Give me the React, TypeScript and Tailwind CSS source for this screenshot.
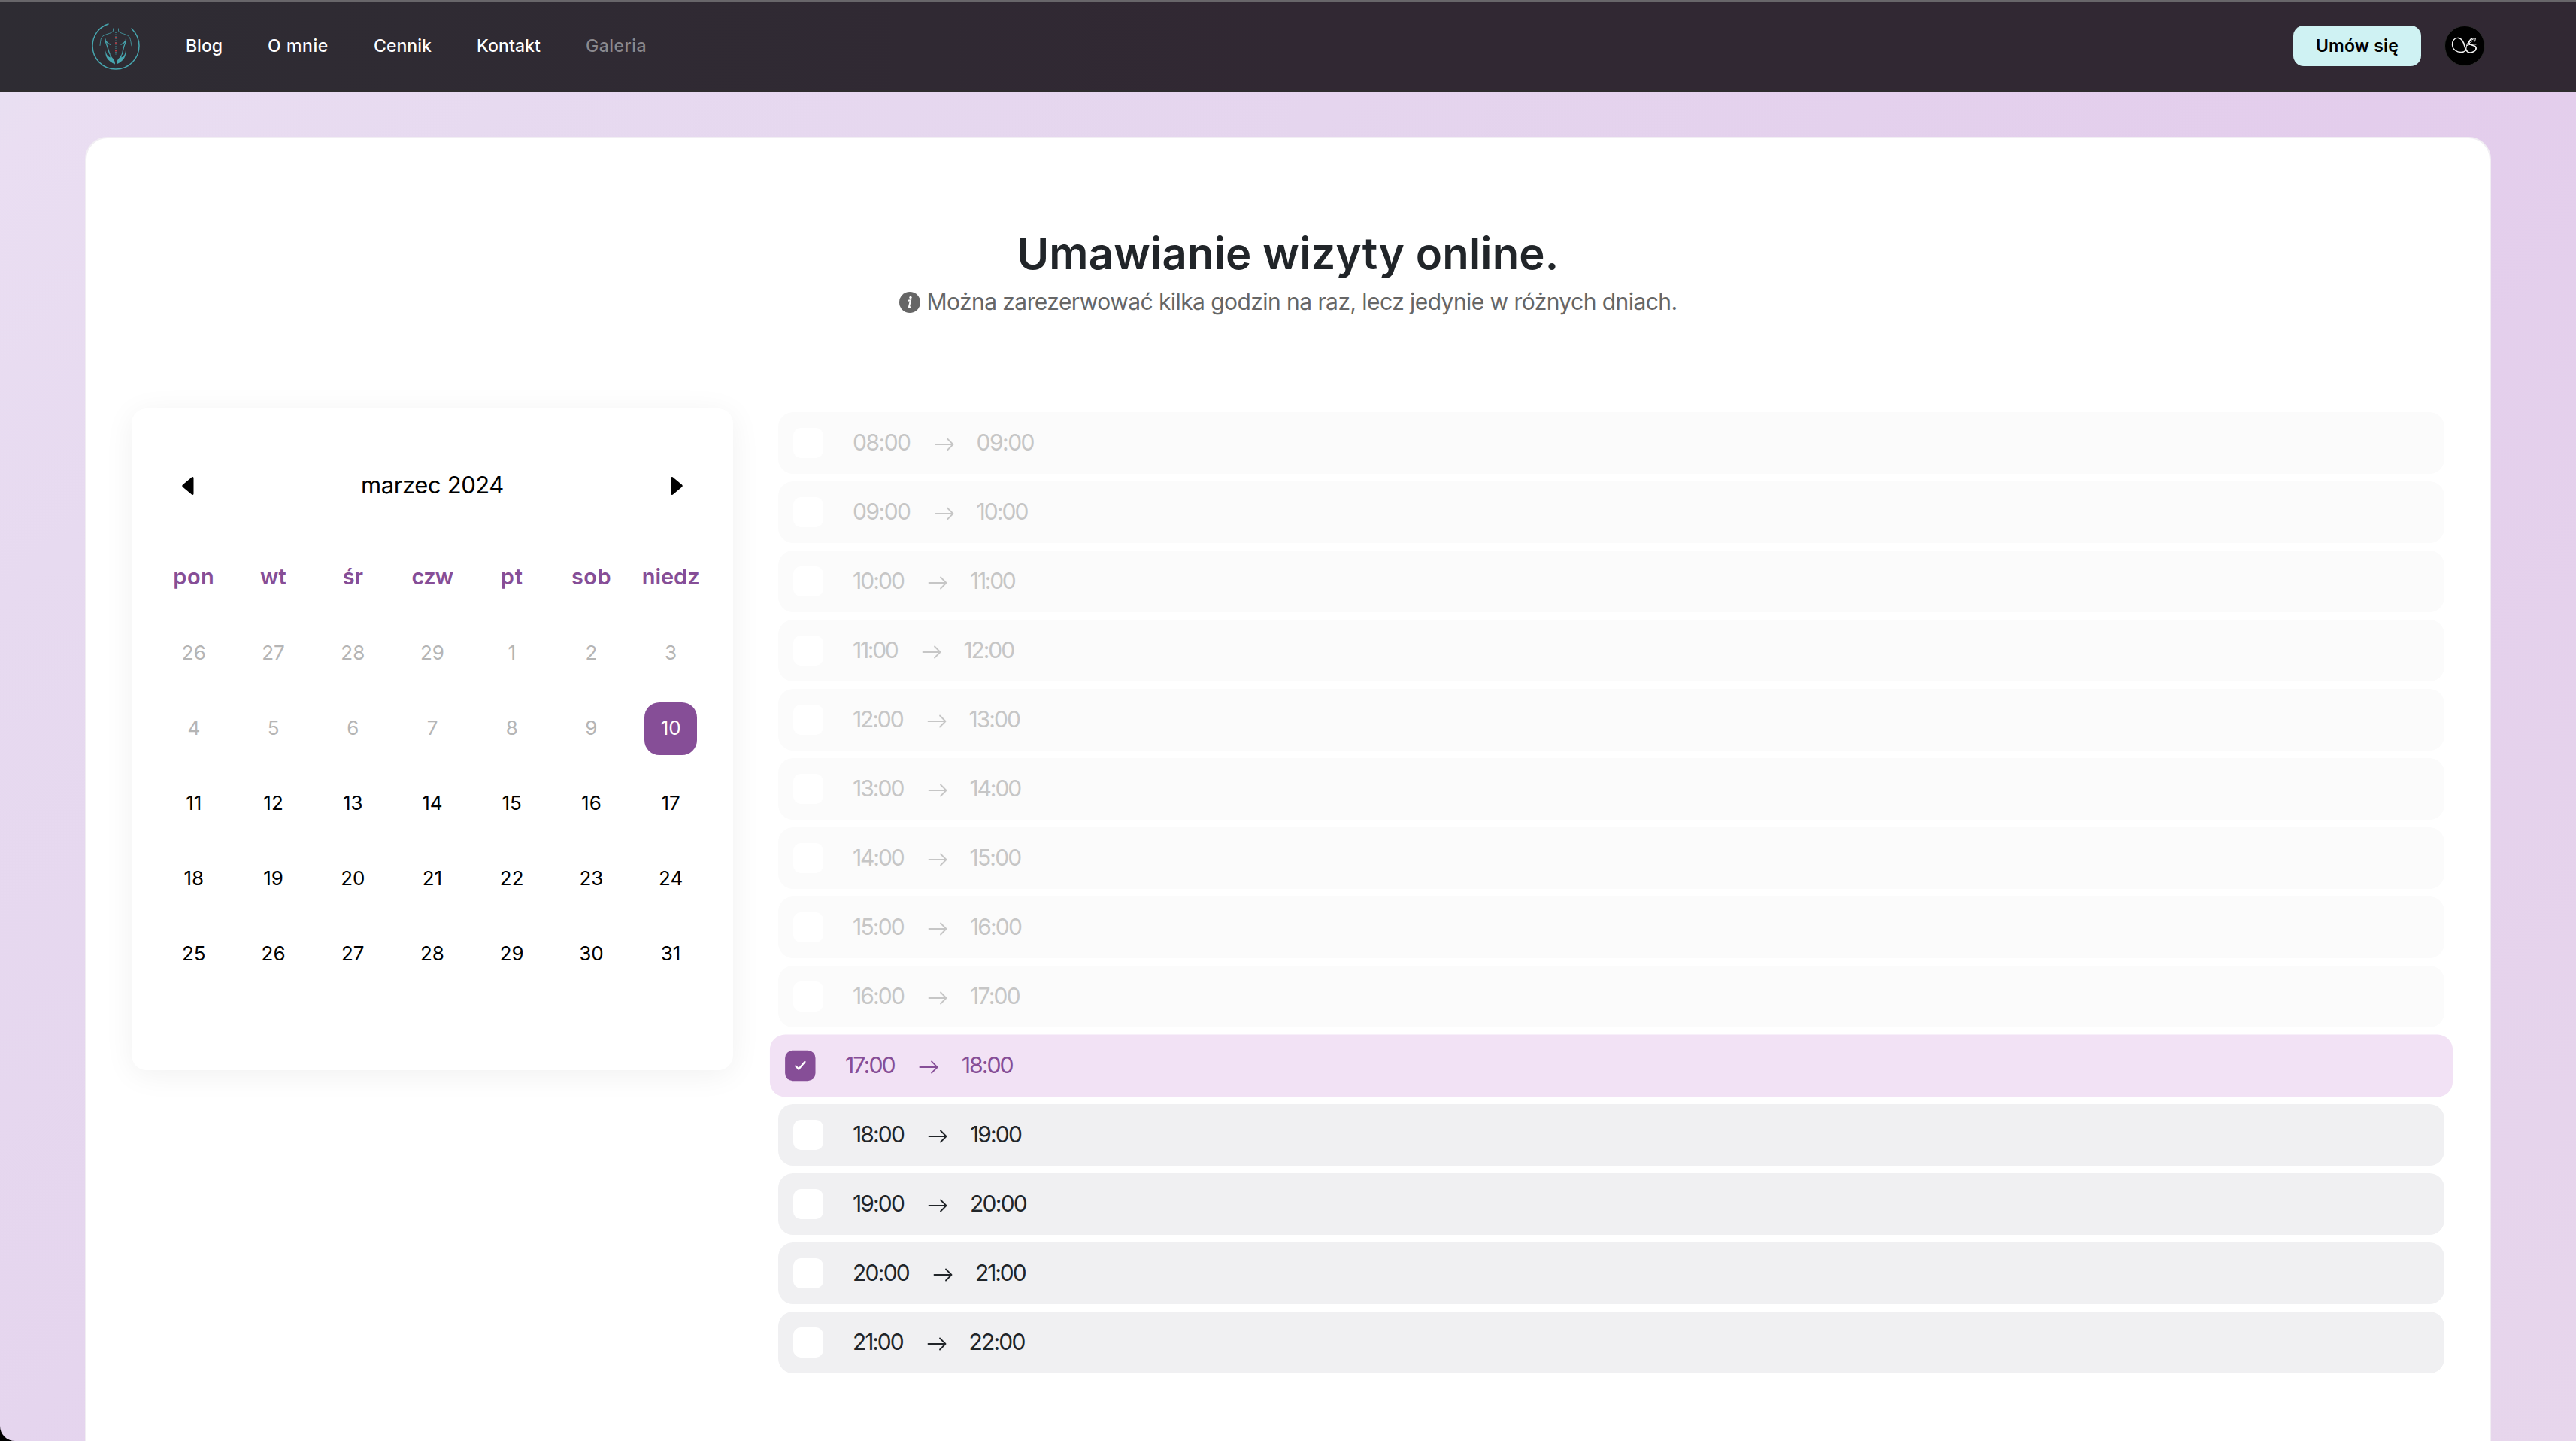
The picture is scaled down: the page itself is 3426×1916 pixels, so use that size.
import { useLayoutEffect, useRef } from 'react';

type FitProps = { text: string; w: number; className?: string };

/* Inline text tracked so that it spans a fixed width. */
function Fit({ text, w, className = '' }: FitProps) {
  const ref = useRef<HTMLSpanElement>(null);
  useLayoutEffect(() => {
    const el = ref.current;
    if (!el) return;
    el.style.letterSpacing = '0px';
    const natural = el.getBoundingClientRect().width;
    el.style.letterSpacing = `${(w - natural) / text.length}px`;
  }, [text, w]);
  return (
    <span ref={ref} className={`inline-block whitespace-pre ${className}`}>
      {text}
    </span>
  );
}

const nav = [
  { label: 'Blog', w: 49 },
  { label: 'O mnie', w: 81 },
  { label: 'Cennik', w: 77 },
  { label: 'Kontakt', w: 85 },
  { label: 'Galeria', w: 81, muted: true },
];

const weekdays = [
  { label: 'pon', w: 55 },
  { label: 'wt', w: 35 },
  { label: 'śr', w: 27 },
  { label: 'czw', w: 55 },
  { label: 'pt', w: 30 },
  { label: 'sob', w: 53 },
  { label: 'niedz', w: 77 },
];

const days = [
  26, 27, 28, 29, 1, 2, 3, 4, 5, 6, 7, 8, 9, 10, 11, 12, 13, 14, 15, 16, 17, 18,
  19, 20, 21, 22, 23, 24, 25, 26, 27, 28, 29, 30, 31,
];

const hourWidths: Record<string, number> = {
  '08': 76.5, '09': 76.5, '10': 68, '11': 59.500, '12': 66.500, '13': 67.500, '14': 67.500,
  '15': 68, '16': 68, '17': 66, '18': 68, '19': 68, '20': 75, '21': 66.500, '22': 74,
};
const hours = ['08', '09', '10', '11', '12', '13', '14', '15', '16', '17', '18', '19', '20', '21'];
const nextHour = (h: string) => String(Number(h) + 1).padStart(2, '0');

function Logo() {
  return (
    <svg viewBox="0 -9 110 100" className="h-[100px] w-[110px]" fill="none" stroke="#47a5ae" strokeLinecap="round">
      <path d="M44 11C31 15 23 27 23 40a31 31 0 0 0 62 0c0-9-4-17-10-23" strokeWidth="1.5" />
      <path d="M50.500 17v3c-1 4-13 4-15.500 9-1.500 3-1.500 7-2 10.500" strokeWidth="1" opacity=".8" />
      <path d="M57.500 17v3c1 4 13 4 15 9 1.500 3 1.500 7 2.500 11" strokeWidth="1" opacity=".8" />
      <path d="M40 31c0 3 1 6 2 8s2 7 4 12M46.500 38c-2-.5-4-1.500-6-5M67.500 31c0 3-1 6-2 8s-2 7-3 12M61 38c2-.5 4-1.500 6-5" strokeWidth="1.300" />
      <path d="M54 22v31" strokeWidth="1.500" strokeDasharray="1 1.600" strokeLinecap="butt" opacity=".75" />
      <path d="M54 28v1.500M54 35.500v2M54 46v1.500" stroke="#d8343b" strokeWidth="1.600" strokeLinecap="butt" />
      <path d="M40.500 46c-1 8 2 14 12.500 18.500 0-4-1-6-4-9l-3-5 .5 5c-4-2-5.500-5-6-9.500ZM67 46c1 8-2 14-12 18.500 0-4 1-6 4-9l3-5-.5 5c4-2 5-5 5.500-9.500Z" fill="#47a5ae" stroke="none" />
    </svg>
  );
}

function Monogram() {
  return (
    <svg viewBox="0 0 52 52" className="h-[52px] w-[52px]" fill="none" stroke="#f4f4f4" strokeLinecap="round">
      <path d="M18 15.500C12 14.500 9 20 9.500 25c.5 6 6 9.500 11.500 9.500 3 0 5-1 6.500-2.500" strokeWidth="1.300" />
      <path d="M18 15.500c5 1 7 7 8 11s2.500 7.500 6 8.500" strokeWidth="1.700" />
      <path d="M27.500 32c1-4 .5-8 3.500-11 3-2.500 6-4 9.500-5.500l-1 4.500c-2-1.500-5 0-6 1.500" strokeWidth="1" />
      <path d="M36 16c-3 1.500-5.500 5-3.500 7.500 2 2 7.500 1.500 8.500 4.500 1 4-4 7.500-9 7" strokeWidth="1.700" />
      <path d="M29 25.500c4-1.500 8-2 12-1.500" strokeWidth="1" />
    </svg>
  );
}

function Header() {
  return (
    <header className="flex h-[122px] items-center justify-between border-t-2 border-b-2 border-t-[#68666a] border-b-[#2e2d2e] bg-gradient-to-r from-[#2e2c33] to-[#312833] to-50% pr-[121px] pl-[100px] text-white">
      <div className="flex items-center">
        <div className="h-[98px]">
          <Logo />
        </div>
        <nav className="ml-[37px] flex gap-[60px]">
          {nav.map((n) => (
            <Fit key={n.label} text={n.label} w={n.w} className={`text-[23px] font-medium ${n.muted ? 'text-[#8b898d]' : 'text-white'}`} />
          ))}
        </nav>
      </div>
      <div className="flex items-center gap-[31px]">
        <button className="h-[54px] w-[170px] rounded-[14px] bg-[#cff2f3] text-black">
          <Fit text="Umów się" w={110} className="text-[23px] font-semibold" />
        </button>
        <div className="flex h-[54px] w-[54px] items-center justify-center rounded-full border border-[#2e2d2e] bg-black">
          <Monogram />
        </div>
      </div>
    </header>
  );
}

function Calendar() {
  return (
    <section className="h-[880px] w-[800px] shrink-0 rounded-[20px] bg-white px-[30px] shadow-[0_6px_40px_rgba(0,0,0,0.06)]">
      <div className="flex h-[206px] items-center justify-between px-[37px]">
        <svg viewBox="0 0 16 24" className="h-6 w-4"><path d="M15.500 1.500v21c0 1.500-1.500 2-2.500 1L1 13.500q-1.500-1.500 0-3L13 .5c1-1 2.500-.5 2.500 1Z" /></svg>
        <Fit text="marzec 2024" w={190} className="-mt-[2px] text-[31px] text-black" />
        <svg viewBox="0 0 16 24" className="h-6 w-4"><path d="M.5 1.500v21c0 1.500 1.500 2 2.500 1l12-10q1.500-1.500 0-3L3 .5C2 -.5.5 0 .5 1.500Z" /></svg>
      </div>
      <div className="-mt-[17px] mb-[17px] grid grid-cols-7">
        {weekdays.map((d) => (
          <div key={d.label} className="flex h-[70px] items-center justify-center text-[29px] font-semibold text-[#864e97]">
            <Fit text={d.label} w={d.w} />
          </div>
        ))}
      </div>
      <div className="grid grid-cols-7">
        {days.map((d, i) => (
          <div key={i} className="flex h-[100px] items-center justify-center">
            <span
              className={`flex h-[70px] w-[70px] items-center justify-center rounded-[20px] pb-[3px] text-[26px] ${
                i === 13 ? 'bg-[#864e97] text-white' : i < 13 ? 'text-[#b5b5b5]' : 'text-black'
              }`}
            >
              {d}
            </span>
          </div>
        ))}
      </div>
    </section>
  );
}

function Slot({ hour }: { hour: string }) {
  const n = Number(hour);
  const selected = n === 17;
  const tone = selected
    ? 'relative scale-[1.01] bg-[#f2e2f5] text-[#864e97]'
    : n < 17
      ? 'bg-[#fbfbfb] text-[#c6c6c6]'
      : 'bg-[#f0f0f2] text-[#212529]';
  return (
    <div className={`flex h-[82px] items-center rounded-[20px] pl-5 text-[30px] ${tone}`}>
      <span className={`flex h-10 w-10 items-center justify-center rounded-[10px] ${selected ? 'bg-[#864e97]' : 'bg-white'}`}>
        {selected && (
          <svg viewBox="0 0 16 14" className="h-[14px] w-4" fill="none" stroke="white" strokeWidth="2.400" strokeLinecap="round" strokeLinejoin="round">
            <path d="M2 7.500 6 11.500 14 2" />
          </svg>
        )}
      </span>
      <Fit text={`${hour}:00`} w={hourWidths[hour]} className="-mt-[2px] ml-[39px]" />
      <svg viewBox="0 0 26 18" className="mr-[30px] ml-[32px] mt-[3px] h-[18px] w-[26px]" fill="none" stroke="currentColor" strokeWidth="1.800" strokeLinecap="round" strokeLinejoin="round">
        <path d="M1.500 9h23M17 1.500 24.500 9 17 16.500" />
      </svg>
      <Fit text={`${nextHour(hour)}:00`} w={hourWidths[nextHour(hour)]} className="-mt-[2px]" />
    </div>
  );
}

export default function App() {
  return (
    <div className="h-[1916px] w-[3426px] overflow-hidden bg-black font-['Inter',sans-serif]">
      <div className="h-full overflow-hidden rounded-bl-[20px] bg-[linear-gradient(135deg,#e6e1f2_0%,#eadef2_4%,#e7daf0_15%,#e5d5ee_36%,#e3cdec_62%,#e7d6ec_100%)]">
        <Header />
        <main className="mx-[113px] mt-[60px] h-[1800px] rounded-[30px] border-2 border-[#f1eef3] bg-white px-[60px] pt-[118px]">
          <div className="flex flex-col items-center">
            <h1 className="flex h-[72px] items-center text-[58px] font-semibold text-[#212529]">
              <Fit text="Umawianie wizyty online." w={721} className="-mt-[2px]" />
            </h1>
            <p className="flex h-[56px] items-center gap-[9px] text-[30px] text-[#666]">
              <svg viewBox="0 0 28 28" className="h-7 w-7">
                <circle cx="14" cy="14" r="14" fill="#666" />
                <path d="M11.500 11.800 15 11.300 13 20q-.2 1.500 2.300.2" fill="none" stroke="#fff" strokeWidth="2" />
                <circle cx="15" cy="7.500" r="1.700" fill="#fff" />
              </svg>
              <Fit text="Można zarezerwować kilka godzin na raz, lecz jedynie w różnych dniach." w={998} className="-mt-[2px]" />
            </p>
          </div>
          <div className="mt-[113px] flex items-start gap-[60px]">
            <Calendar />
            <section className="flex flex-1 flex-col gap-[10px] pt-[5px]">
              {hours.map((h) => (
                <Slot key={h} hour={h} />
              ))}
            </section>
          </div>
        </main>
      </div>
    </div>
  );
}
